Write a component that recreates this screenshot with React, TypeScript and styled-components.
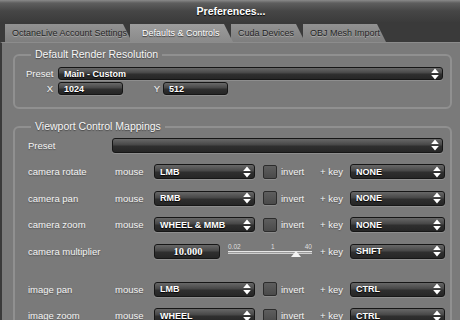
import { createGlobalStyle, styled } from "styled-components";

const GlobalStyle = createGlobalStyle`
  html, body {
    margin: 0;
    padding: 0;
    background: #7a7a7a;
  }
  * {
    box-sizing: border-box;
  }
`;

const Window = styled.div`
  width: 460px;
  height: 320px;
  overflow: hidden;
  display: flex;
  flex-direction: column;
  background: #7a7a7a;
  font-family: "Liberation Sans", Arial, sans-serif;
  color: #f2f2f2;
`;

const TitleBar = styled.div`
  flex: none;
  height: 22px;
  display: flex;
  align-items: center;
  justify-content: center;
  padding-left: 2px;
  background: linear-gradient(#8a8a8a 0px, #5e5e5e 3px, #464646 11px, #3b3b3b 100%);
  font-size: 10.5px;
  font-weight: bold;
  color: #ffffff;
  text-shadow: 0 1px 1px #000;
`;

const TabBar = styled.div`
  flex: none;
  height: 20px;
  display: flex;
  align-items: flex-end;
  padding-left: 5px;
  background: #3a3a3a;
`;

const Tab = styled.div<{ $active?: boolean; $w: number }>`
  width: ${p => p.$w}px;
  height: 18px;
  margin-right: -2px;
  padding-left: ${p => (p.$active ? 12 : 7)}px;
  display: flex;
  align-items: center;
  white-space: nowrap;
  overflow: hidden;
  font-size: 9px;
  clip-path: polygon(0 0, calc(100% - 9px) 0, 100% 100%, 0 100%);
  background: ${p =>
    p.$active
      ? "linear-gradient(#9c9c9c, #8a8a8a)"
      : "linear-gradient(#929292, #7e7e7e)"};
  color: ${p => (p.$active ? "#ffffff" : "#262626")};
  text-shadow: ${p => (p.$active ? "0 1px 1px #333" : "0 1px 0 #aaa")};
  z-index: ${p => (p.$active ? 2 : 1)};
`;

const Content = styled.div`
  flex: 1;
  display: flex;
  flex-direction: column;
  gap: 11px;
  padding: 5px 8px 0 11px;
  border-left: 2px solid #3a3a3a;
  border-top: 1px solid #8c8c8c;
`;

const Group = styled.fieldset<{ $top: number }>`
  margin: 0;
  min-width: 0;
  border: 2px solid #909090;
  border-radius: 6px;
  padding: ${p => p.$top}px 7px 12px 11px;
  display: flex;
  flex-direction: column;
`;

const Legend = styled.legend`
  margin-left: 5px;
  padding: 0 4px;
  font-size: 10.5px;
  line-height: 13px;
  color: #f6f6f6;
  text-shadow: 0 1px 1px #444;
`;

const ResRows = styled.div`
  display: flex;
  flex-direction: column;
  gap: 2px;
`;

const Row = styled.div`
  display: flex;
  align-items: center;
  height: 16px;
`;

const ResRow = styled(Row)`
  height: 13px;
`;

const Label = styled.span<{ $w: number; $right?: boolean; $pad?: number }>`
  flex: none;
  width: ${p => p.$w}px;
  text-align: ${p => (p.$right ? "right" : "left")};
  padding-right: ${p => (p.$right ? p.$pad ?? 5 : 0)}px;
  padding-left: ${p => (p.$right ? 0 : p.$pad ?? 0)}px;
  font-size: 9.5px;
  white-space: nowrap;
  color: #f4f4f4;
  text-shadow: 0 1px 1px #555;
`;

const DarkBox = styled.div<{ $w?: number; $h?: number }>`
  flex: ${p => (p.$w ? "none" : "1")};
  width: ${p => (p.$w ? `${p.$w}px` : "auto")};
  height: ${p => p.$h ?? 15}px;
  display: flex;
  align-items: center;
  padding: 0 3px 0 5px;
  border: 1px solid #161616;
  border-radius: 3px;
  background: linear-gradient(#686868 0%, #474747 45%, #2f2f2f 55%, #262626 100%);
  box-shadow: 0 1px 0 #8e8e8e;
  font-size: 9px;
  font-weight: bold;
  color: #ffffff;
  text-shadow: 0 1px 1px #000;
  white-space: nowrap;
`;

const Value = styled.span`
  flex: 1;
`;

const NumberBox = styled(DarkBox)`
  justify-content: center;
  font-family: "Liberation Serif", "Times New Roman", serif;
  font-size: 10.5px;
`;

const Check = styled.div`
  flex: none;
  width: 14px;
  height: 14px;
  margin: 0 4px 0 8px;
  border: 1px solid #2c2c2c;
  border-radius: 2px;
  background: linear-gradient(#5e5e5e, #4a4a4a);
  box-shadow: 0 1px 0 #8c8c8c;
`;

const MapRows = styled.div`
  display: flex;
  flex-direction: column;
  gap: 10.5px;
  padding-left: 2px;
`;

const Spacer = styled.div`
  height: 1px;
`;

const Slider = styled.div`
  flex: none;
  width: 84px;
  margin: 0 8px;
  height: 16px;
  display: flex;
  flex-direction: column;
  position: relative;
`;

const Ticks = styled.div`
  display: flex;
  justify-content: space-between;
  height: 8px;
  font-size: 6.5px;
  line-height: 7px;
  color: #dedede;
`;

const Track = styled.div`
  height: 3px;
  border-top: 1px solid #e6e6e6;
  border-bottom: 1px solid #cfcfcf;
  background: #9a9a9a;
`;

const Thumb = styled.div`
  position: absolute;
  left: 75%;
  top: 8px;
  width: 0;
  height: 0;
  border-left: 5px solid transparent;
  border-right: 5px solid transparent;
  border-bottom: 6px solid #f4f4f4;
`;

function Arrows() {
  return (
    <svg width="8" height="12" viewBox="0 0 8 12">
      <path d="M4 0.5 L7.8 5 L0.2 5 Z" fill="#fff" />
      <path d="M0.2 7 L7.8 7 L4 11.5 Z" fill="#fff" />
    </svg>
  );
}

function Dropdown({ value, w, h }: { value?: string; w?: number; h?: number }) {
  return (
    <DarkBox $w={w} $h={h}>
      <Value>{value}</Value>
      <Arrows />
    </DarkBox>
  );
}

interface IMapping {
  name: string;
  mouse: string;
  keyName: string;
}

const mappingsTop: IMapping[] = [
  { name: "camera rotate", mouse: "LMB", keyName: "NONE" },
  { name: "camera pan", mouse: "RMB", keyName: "NONE" },
  { name: "camera zoom", mouse: "WHEEL & MMB", keyName: "NONE" },
];

const mappingsBottom: IMapping[] = [
  { name: "image pan", mouse: "LMB", keyName: "CTRL" },
  { name: "image zoom", mouse: "WHEEL", keyName: "CTRL" },
];

function MappingRow({ name, mouse, keyName }: IMapping) {
  return (
    <Row>
      <Label $w={84}>{name}</Label>
      <Label $w={42} $pad={3}>mouse</Label>
      <Dropdown value={mouse} w={101} />
      <Check />
      <Label $w={39}>invert</Label>
      <Label $w={30}>+ key</Label>
      <Dropdown value={keyName} w={95} />
    </Row>
  );
}

export default function App() {
  return (
    <>
      <GlobalStyle />
      <Window>
        <TitleBar>Preferences...</TitleBar>
        <TabBar>
          <Tab $w={127}>OctaneLive Account Settings</Tab>
          <Tab $w={103} $active>Defaults &amp; Controls</Tab>
          <Tab $w={74}>Cuda Devices</Tab>
          <Tab $w={83}>OBJ Mesh Import</Tab>
        </TabBar>
        <Content>
          <Group $top={6}>
            <Legend>Default Render Resolution</Legend>
            <ResRows>
              <ResRow>
                <Label $w={32} $right>Preset</Label>
                <Dropdown value="Main - Custom" h={13} />
              </ResRow>
              <ResRow>
                <Label $w={32} $right>X</Label>
                <DarkBox $w={65} $h={13}>1024</DarkBox>
                <Label $w={40} $right $pad={3}>Y</Label>
                <DarkBox $w={65} $h={13}>512</DarkBox>
              </ResRow>
            </ResRows>
          </Group>
          <Group $top={4}>
            <Legend>Viewport Control Mappings</Legend>
            <MapRows>
              <Row>
                <Label $w={84}>Preset</Label>
                <Dropdown />
              </Row>
              {mappingsTop.map(m => (
                <MappingRow key={m.name} {...m} />
              ))}
              <Row>
                <Label $w={84}>camera multiplier</Label>
                <Label $w={42} />
                <NumberBox $w={66}>10.000</NumberBox>
                <Slider>
                  <Ticks>
                    <span>0.02</span>
                    <span>1</span>
                    <span>40</span>
                  </Ticks>
                  <Track />
                  <Thumb />
                </Slider>
                <Label $w={30}>+ key</Label>
                <Dropdown value="SHIFT" w={95} />
              </Row>
              <Spacer />
              {mappingsBottom.map(m => (
                <MappingRow key={m.name} {...m} />
              ))}
            </MapRows>
          </Group>
        </Content>
      </Window>
    </>
  );
}
